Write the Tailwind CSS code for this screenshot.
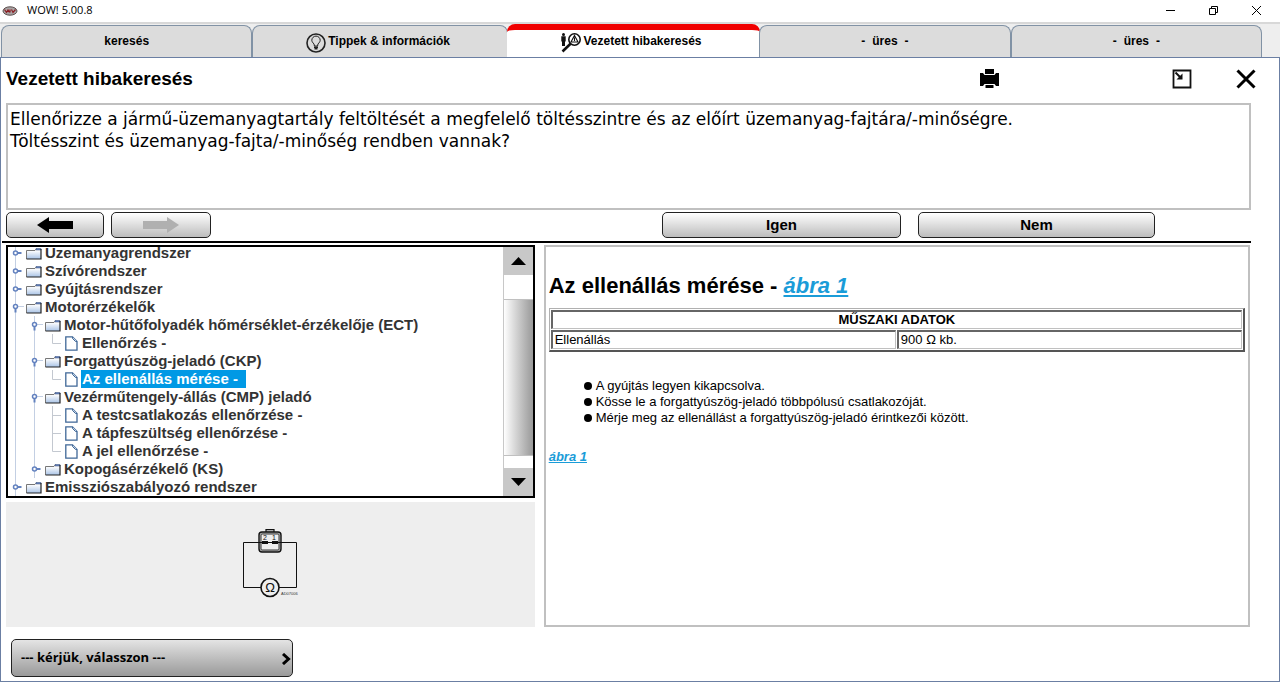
<!DOCTYPE html>
<html lang="hu">
<head>
  <meta charset="utf-8">
  <meta name="viewport" content="width=device-width, initial-scale=1.0">
  <title>WOW! 5.00.8</title>
  <script src="https://cdn.jsdelivr.net/npm/@tailwindcss/browser@4"></script>
</head>
<body class="flex min-h-screen flex-col bg-[#eeeeee] font-['Liberation_Sans',Arial,sans-serif] text-black">

  <!-- Icon sprite -->
  <svg class="absolute h-0 w-0">
    <defs>
      <linearGradient id="folder-fill" x1="0" y1="0" x2="0" y2="1">
        <stop offset="0.2" stop-color="#ffffff"/>
        <stop offset="1" stop-color="#a9c3e6"/>
      </linearGradient>
    </defs>
    <symbol id="closed" viewBox="0 0 15 18">
      <path d="M4.500 0V18" stroke="#c3cfe3"/>
      <path d="M6 9H10.500" stroke="#6382bf" stroke-width="2"/>
      <circle cx="4.500" cy="9" r="2" fill="#fff" stroke="#6382bf" stroke-width="1.500"/>
    </symbol>
    <symbol id="open" viewBox="0 0 15 18">
      <path d="M4.500 0V18M7 8.500H13" stroke="#c3cfe3"/>
      <path d="M4.500 10V14.500" stroke="#6382bf" stroke-width="2"/>
      <circle cx="4.500" cy="8.500" r="2" fill="#fff" stroke="#6382bf" stroke-width="1.500"/>
    </symbol>
    <symbol id="branch" viewBox="0 0 16 18">
      <path d="M3.500 0V18M3.500 9.500H12" fill="none" stroke="#c3c8d0"/>
    </symbol>
    <symbol id="branch-end" viewBox="0 0 16 18">
      <path d="M3.500 0V9.500H12" fill="none" stroke="#c3c8d0"/>
    </symbol>
    <symbol id="folder" viewBox="0 0 16 13">
      <path d="M.5 3.500H9L10.500 1.500H15V12H.5Z" fill="url(#folder-fill)"/>
      <path d="M.5 12V3.500H9L10.500 1.500" fill="none" stroke="#777"/>
      <path d="M10 1.500H15V3H10Z" fill="#6382bf" stroke="#4a5f8c" stroke-width=".6"/>
      <path d="M.5 12H15M15 2V12.500" fill="none" stroke="#222" stroke-width="1.200"/>
    </symbol>
    <symbol id="file" viewBox="0 0 13 15">
      <path d="M.8 .8H7.500L12 5.500V14.200H.8Z" fill="#fff" stroke="#3f6797" stroke-width="1.300"/>
      <path d="M7.500 1V2.500L10.500 5.500H12" fill="#cfdcec" stroke="#3f6797"/>
    </symbol>
  </svg>

  <!-- Title bar -->
  <header class="flex h-6 items-center border-b-2 border-[#d8d8d8] bg-white pr-0.5 pb-0.5">
    <svg class="ml-0.5 h-4 w-4" viewBox="0 0 16 16">
      <ellipse cx="8" cy="9" rx="7" ry="4.200" fill="#a9a4a4" stroke="#5d5050"/>
      <path d="M2.500 7.500L4.500 10.500L6 8L7.500 10.500M8 7.500V10.500M9.500 7.500L11 10.500L13.500 7.500" fill="none" stroke="#8c1f25" stroke-width="1.200"/>
    </svg>
    <h1 class="ml-[9px] flex-1 font-['Open_Sans',sans-serif] text-[11px] leading-4">WOW! 5.00.8</h1>
    <div class="flex items-center">
      <button class="flex h-5 w-[43px] items-center justify-center" aria-label="Kis méret">
        <svg class="h-[11px] w-[11px]" viewBox="0 0 11 11"><path d="M1 5.500H10" stroke="#000"/></svg>
      </button>
      <button class="flex h-5 w-[43px] items-center justify-center" aria-label="Előző méret">
        <svg class="h-[11px] w-[11px]" viewBox="0 0 11 11" fill="none" stroke="#000"><path d="M1.500 3.500H7.500V9.500H1.500ZM3.500 3V1.500H9.500V7.500H8"/></svg>
      </button>
      <button class="flex h-5 w-[43px] items-center justify-center" aria-label="Bezárás">
        <svg class="h-[11px] w-[11px]" viewBox="0 0 11 11"><path d="M1 1L10 10M10 1L1 10" stroke="#000"/></svg>
      </button>
    </div>
  </header>

  <!-- Tabs -->
  <nav class="flex h-[33px] items-end pr-[18px] pl-px text-[12px] font-bold">
    <button class="flex h-8 flex-1 items-center justify-center rounded-t-lg border border-b-0 border-[#8192a5] bg-[#dcdcdc] pb-0.5">keresés</button>
    <button class="flex h-8 flex-1 items-center justify-center rounded-t-lg border border-b-0 border-[#8192a5] bg-[#dcdcdc] pr-1 pb-0.5">
      <svg class="mt-1 h-5 w-5" viewBox="0 0 20 20" fill="none" stroke="#222">
        <circle cx="10" cy="10" r="9" stroke-width="1.600"/>
        <path d="M8.300 13V12C8.300 10.500 5.800 9.500 5.800 7.300A4.200 4.200 0 0 1 14.200 7.300C14.200 9.500 11.700 10.500 11.700 12V13Z"/>
        <path d="M8 14.200H12M8.500 15.800H11.500" stroke-width="1.400"/>
      </svg>
      <span class="ml-0.5">Tippek &amp; információk</span>
    </button>
    <button class="-mx-px flex h-[33px] flex-1 items-center justify-center rounded-t-lg border-t-6 border-[#f00000] bg-white pr-1 pb-1.5">
      <svg class="mt-1 h-5 w-5" viewBox="0 0 20 20" fill="none" stroke="#111">
        <circle cx="2.500" cy="1.500" r="1.500" fill="#111" stroke="none"/>
        <path d="M.3 3.200H4.700V8.500H4V13H1V8.500H.3Z" fill="#111" stroke="none"/>
        <circle cx="13.500" cy="6.500" r="5.700" stroke-width="1.600"/>
        <path d="M13.500 2.500L17 9H10ZM13.500 4.500V8" stroke-width="1.100"/>
        <path d="M9.500 10.800L1.500 18.500" stroke-width="2.600"/>
      </svg>
      <span class="ml-0.5">Vezetett hibakeresés</span>
    </button>
    <button class="flex h-8 flex-1 items-center justify-center gap-[7px] rounded-t-lg border border-b-0 border-[#8192a5] bg-[#dcdcdc] pb-0.5"><span>-</span><span>üres</span><span>-</span></button>
    <button class="flex h-8 flex-1 items-center justify-center gap-[7px] rounded-t-lg border border-b-0 border-[#8192a5] bg-[#dcdcdc] pb-0.5"><span>-</span><span>üres</span><span>-</span></button>
  </nav>

  <main class="flex flex-1 flex-col border border-[#6b7fa3] bg-white">
    <!-- Page heading -->
    <div class="flex h-[45px] items-center pr-[23px] pb-1 pl-[5px]">
      <h2 class="flex-1 text-[19px] leading-6 font-bold">Vezetett hibakeresés</h2>
      <button class="mr-[172px]" aria-label="Nyomtatás">
        <svg class="h-5 w-5" viewBox="0 0 20 20"><path d="M5 0H14V5H5ZM0 4H3L4.500 6H14.500L16 4H19V17H16L14.500 15H4.500L3 17H0ZM5.500 16H13.500V19H5.500Z"/></svg>
      </button>
      <button class="mr-[44px]" aria-label="Kicsinyítés">
        <svg class="h-5 w-5" viewBox="0 0 20 20" fill="none" stroke="#111"><path d="M1.500 1.500H18.500V18.500H1.500Z" stroke-width="1.800"/><path d="M3.500 3.500L8 8" stroke-width="2"/><path d="M10.500 4.500V10.500H4.500Z" fill="#111" stroke="none"/></svg>
      </button>
      <button aria-label="Bezár">
        <svg class="h-5 w-5" viewBox="0 0 20 20"><path d="M1.500 1.500L18.500 18.500M18.500 1.500L1.500 18.500" stroke="#000" stroke-width="3"/></svg>
      </button>
    </div>

    <!-- Question -->
    <div class="mr-7 ml-[5px] h-[107px] border-2 border-[#c0c0c0] px-0.5 py-[3px] font-['DejaVu_Sans',Verdana,sans-serif] text-[17px] leading-[22px]">
      <p>Ellenőrizze a jármű-üzemanyagtartály feltöltését a megfelelő töltésszintre és az előírt üzemanyag-fajtára/-minőségre.</p>
      <p>Töltésszint és üzemanyag-fajta/-minőség rendben vannak?</p>
    </div>

    <!-- Answers -->
    <div class="mr-7 ml-px flex items-start border-b-2 border-black pt-0.5 pr-24 pb-[3px] pl-1 text-[15px] font-bold">
      <button class="flex h-[26px] w-[98px] items-center justify-center rounded-[5px] border border-[#222] bg-linear-to-b from-white to-[#bdbdbd]" aria-label="Vissza">
        <svg class="h-4 w-9" viewBox="0 0 36 16"><path d="M0 8L12 0V4H36V12H12V16Z"/></svg>
      </button>
      <button class="ml-[7px] flex h-[26px] w-[100px] items-center justify-center rounded-[5px] border border-[#222] bg-linear-to-b from-white to-[#bdbdbd]" aria-label="Előre" disabled>
        <svg class="h-4 w-9" viewBox="0 0 36 16" fill="#b0b0b0"><path d="M36 8L24 0V4H0V12H24V16Z"/></svg>
      </button>
      <span class="flex-1"></span>
      <button class="h-[26px] w-[239px] rounded-[5px] border border-[#222] bg-linear-to-b from-white to-[#bdbdbd]">Igen</button>
      <button class="ml-[17px] h-[26px] w-[237px] rounded-[5px] border border-[#222] bg-linear-to-b from-white to-[#bdbdbd]">Nem</button>
    </div>

    <div class="mt-0.5 mr-[29px] ml-[5px] flex flex-1 gap-[9px]">
      <section class="flex w-[42.5%] shrink-0 flex-col">
        <!-- Component tree -->
        <div class="flex h-[253px] border-2 border-black">
          <div class="flex-1 overflow-hidden pl-[3px] text-[15px] font-bold text-[#333]">
            <ul class="-mt-[3px]">
              <li><button class="flex h-[18px] items-center"><svg class="h-[18px] w-[15px]"><use href="#closed"/></svg><svg class="mr-[3px] h-[13px] w-4"><use href="#folder"/></svg>Üzemanyagrendszer</button></li>
              <li><button class="flex h-[18px] items-center"><svg class="h-[18px] w-[15px]"><use href="#closed"/></svg><svg class="mr-[3px] h-[13px] w-4"><use href="#folder"/></svg>Szívórendszer</button></li>
              <li><button class="flex h-[18px] items-center"><svg class="h-[18px] w-[15px]"><use href="#closed"/></svg><svg class="mr-[3px] h-[13px] w-4"><use href="#folder"/></svg>Gyújtásrendszer</button></li>
              <li>
                <button class="flex h-[18px] items-center"><svg class="h-[18px] w-[15px]"><use href="#open"/></svg><svg class="mr-[3px] h-[13px] w-4"><use href="#folder"/></svg>Motorérzékelők</button>
                <ul class="ml-1 border-l border-[#c3cfe3] pl-[14px]">
                  <li>
                    <button class="flex h-[18px] items-center"><svg class="h-[18px] w-[15px]"><use href="#open"/></svg><svg class="mr-[3px] h-[13px] w-4"><use href="#folder"/></svg>Motor-hűtőfolyadék hőmérséklet-érzékelője (ECT)</button>
                    <ul class="ml-1 border-l border-[#c3cfe3] pl-[14px]">
                      <li><button class="flex h-[18px] items-center"><svg class="h-[18px] w-4"><use href="#branch-end"/></svg><svg class="mr-1 h-[15px] w-[13px]"><use href="#file"/></svg>Ellenőrzés -</button></li>
                    </ul>
                  </li>
                  <li>
                    <button class="flex h-[18px] items-center"><svg class="h-[18px] w-[15px]"><use href="#open"/></svg><svg class="mr-[3px] h-[13px] w-4"><use href="#folder"/></svg>Forgattyúszög-jeladó (CKP)</button>
                    <ul class="ml-1 border-l border-[#c3cfe3] pl-[14px]">
                      <li><button class="flex h-[18px] items-center"><svg class="h-[18px] w-4"><use href="#branch-end"/></svg><svg class="mr-[3px] h-[15px] w-[13px]"><use href="#file"/></svg><span class="bg-[#0099e5] pr-2 pl-px leading-[18px] text-white">Az ellenállás mérése -</span></button></li>
                    </ul>
                  </li>
                  <li>
                    <button class="flex h-[18px] items-center"><svg class="h-[18px] w-[15px]"><use href="#open"/></svg><svg class="mr-[3px] h-[13px] w-4"><use href="#folder"/></svg>Vezérműtengely-állás (CMP) jeladó</button>
                    <ul class="ml-1 border-l border-[#c3cfe3] pl-[14px]">
                      <li><button class="flex h-[18px] items-center"><svg class="h-[18px] w-4"><use href="#branch"/></svg><svg class="mr-1 h-[15px] w-[13px]"><use href="#file"/></svg>A testcsatlakozás ellenőrzése -</button></li>
                      <li><button class="flex h-[18px] items-center"><svg class="h-[18px] w-4"><use href="#branch"/></svg><svg class="mr-1 h-[15px] w-[13px]"><use href="#file"/></svg>A tápfeszültség ellenőrzése -</button></li>
                      <li><button class="flex h-[18px] items-center"><svg class="h-[18px] w-4"><use href="#branch-end"/></svg><svg class="mr-1 h-[15px] w-[13px]"><use href="#file"/></svg>A jel ellenőrzése -</button></li>
                    </ul>
                  </li>
                  <li><button class="flex h-[18px] items-center"><svg class="h-[18px] w-[15px]"><use href="#closed"/></svg><svg class="mr-[3px] h-[13px] w-4"><use href="#folder"/></svg>Kopogásérzékelő (KS)</button></li>
                </ul>
              </li>
              <li><button class="flex h-[18px] items-center"><svg class="h-[18px] w-[15px]"><use href="#closed"/></svg><svg class="mr-[3px] h-[13px] w-4"><use href="#folder"/></svg>Emissziószabályozó rendszer</button></li>
            </ul>
          </div>
          <!-- Scrollbar -->
          <div class="flex w-[30px] flex-col border-l border-[#c8c8c8]">
            <button class="flex h-7 items-center justify-center bg-[#c8c8c8]" aria-label="Fel">
              <svg class="h-2 w-[15px]" viewBox="0 0 15 8"><path d="M0 8L7.500 0L15 8Z"/></svg>
            </button>
            <div class="flex flex-1 flex-col pt-6 pb-3">
              <div class="flex-1 border-y border-[#c0c0c0] bg-linear-to-r from-white to-[#999]"></div>
            </div>
            <button class="flex h-7 items-center justify-center bg-[#c8c8c8]" aria-label="Le">
              <svg class="h-2 w-[15px]" viewBox="0 0 15 8"><path d="M0 0L7.500 8L15 0Z"/></svg>
            </button>
          </div>
        </div>

        <!-- Wiring sketch -->
        <div class="mt-1 flex flex-1 items-center justify-center bg-[#eeeeee] pb-1">
          <svg class="h-[70px] w-[56px] overflow-visible" viewBox="0 0 56 70" fill="none" stroke="#111">
            <path d="M1.500 14.500V59.500H54.500V14.500H1.500"/>
            <path d="M24 4V1.500H32V4" fill="#aaa" stroke-width="1.200"/>
            <rect x="17" y="4" width="22" height="20" rx="3" fill="#bbb" stroke-width="1.400"/>
            <rect x="19" y="6" width="18" height="16" rx="1" fill="#eee" stroke="#333"/>
            <path d="M15 14.500H41"/>
            <path d="M20 14.500H26M30 14.500H36" stroke-width="3"/>
            <circle cx="28" cy="59.500" r="9" fill="#eee" stroke-width="1.600"/>
            <text x="21" y="12" font-size="7" fill="#111" stroke="none">2</text>
            <text x="30" y="12" font-size="7" fill="#111" stroke="none">1</text>
            <text x="28" y="64" font-size="13" text-anchor="middle" fill="#111" stroke="none">Ω</text>
            <text x="39" y="67" font-size="4" fill="#333" stroke="none">AD07006</text>
          </svg>
        </div>
      </section>

      <!-- Measuring instructions -->
      <article class="flex-1 border-2 border-[#c0c0c0] px-[3px] text-[13px] leading-4">
        <h3 class="mt-[23px] text-[22px] leading-8 font-bold">Az ellenállás mérése - <a href="#abra1" class="text-[#1a9cd8] italic underline">ábra 1</a></h3>
        <table class="mt-1.5 w-full table-fixed border-separate border-spacing-px border-t border-r-2 border-b-2 border-l border-t-[#b0b0b0] border-r-[#555] border-b-[#555] border-l-[#b0b0b0]">
          <thead>
            <tr><th colspan="2" class="border-t-2 border-r border-b border-l-2 border-t-[#666] border-r-[#c0c0c0] border-b-[#c0c0c0] border-l-[#666]">MŰSZAKI ADATOK</th></tr>
          </thead>
          <tbody>
            <tr>
              <td class="border-t-2 border-r border-b border-l-2 border-t-[#666] border-r-[#c0c0c0] border-b-[#c0c0c0] border-l-[#666] px-0.5">Ellenállás</td>
              <td class="border-t-2 border-r border-b border-l-2 border-t-[#666] border-r-[#c0c0c0] border-b-[#c0c0c0] border-l-[#666] px-0.5">900 Ω kb.</td>
            </tr>
          </tbody>
        </table>
        <ul class="mt-[26px] ml-[35px]" id="abra1">
          <li class="flex items-center gap-1"><span class="h-2 w-2 rounded-full bg-black"></span>A gyújtás legyen kikapcsolva.</li>
          <li class="flex items-center gap-1"><span class="h-2 w-2 rounded-full bg-black"></span>Kösse le a forgattyúszög-jeladó többpólusú csatlakozóját.</li>
          <li class="flex items-center gap-1"><span class="h-2 w-2 rounded-full bg-black"></span>Mérje meg az ellenállást a forgattyúszög-jeladó érintkezői között.</li>
        </ul>
        <p class="mt-[23px]"><a href="#abra1" class="font-bold text-[#1a9cd8] italic underline">ábra 1</a></p>
      </article>
    </div>

    <!-- Footer selector -->
    <div class="relative mt-3 mb-1 ml-2.5 w-[282px]">
      <select aria-label="Választás" class="block h-[38px] w-full appearance-none rounded-[5px] border border-[#222] bg-linear-to-b from-[#e4e4e4] to-[#9a9a9a] pl-[9px] font-['Open_Sans',sans-serif] text-[13px] font-bold">
        <option>--- kérjük, válasszon ---</option>
      </select>
      <svg class="pointer-events-none absolute top-3.5 right-0.5 h-3 w-2.5" viewBox="0 0 10 12"><path d="M2 1L7.500 6L2 11" fill="none" stroke="#000" stroke-width="3"/></svg>
    </div>
  </main>
</body>
</html>
